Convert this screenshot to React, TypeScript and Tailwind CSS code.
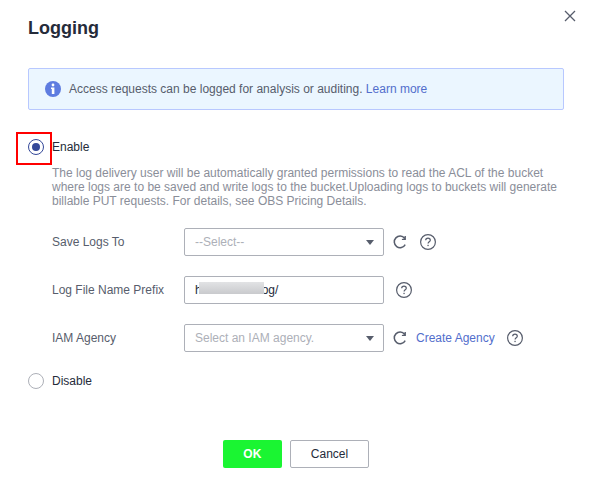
import { useState } from "react";

// stands for the part of the prefix hidden by the mask
const maskedPrefix = "h" + "\u00a0".repeat(18) + "og/";

const radioClass =
  "relative size-4 shrink-0 appearance-none rounded-full border border-[#adb0b8] bg-white checked:border-[#344899] checked:before:absolute checked:before:inset-[3px] checked:before:rounded-full checked:before:bg-[#344899] checked:before:content-['']";

const fieldClass =
  "h-7 w-full appearance-none rounded-xs border border-[#adb0b8] bg-white px-2.5 outline-none focus:border-[#526ecc]";

function InfoIcon() {
  return (
    <svg className="size-4 shrink-0" viewBox="0 0 16 16" aria-hidden="true">
      <circle cx="8" cy="8" r="8" fill="#5e7ce0" />
      <circle cx="8" cy="4" r="1.4" fill="#fff" />
      <path d="M6 6.4h3.4V13H6.8V7.9H6z" fill="#fff" />
    </svg>
  );
}

function RefreshButton({ label }: { label: string }) {
  return (
    <button type="button" aria-label={label} className="ml-2 size-4 shrink-0">
      <svg className="size-4" viewBox="0 0 16 16" fill="none" aria-hidden="true">
        <path d="M12.6 4.2A5.8 5.8 0 1 0 13.2 10.6" stroke="#575d6c" strokeWidth="1.5" />
        <path d="M13.9 2v4H9.9V4.9l2.2-.3.5-2.6z" fill="#575d6c" />
      </svg>
    </button>
  );
}

function HelpButton({ label }: { label: string }) {
  return (
    <button type="button" aria-label={label} className="ml-3 size-4 shrink-0">
      <svg className="size-4" viewBox="0 0 16 16" fill="none" aria-hidden="true">
        <circle cx="8" cy="8" r="7.4" stroke="#575d6c" strokeWidth="1.2" />
        <path
          d="M5.7 6.3C5.7 4.9 6.6 4.1 8 4.1s2.3.8 2.3 2.1c0 1.6-2.2 1.7-2.2 3.4"
          stroke="#575d6c"
          strokeWidth="1.2"
        />
        <rect x="7.4" y="10.8" width="1.3" height="1.3" fill="#575d6c" />
      </svg>
    </button>
  );
}

function SelectField({ id, placeholder }: { id: string; placeholder: string }) {
  return (
    <div className="relative w-[200px]">
      <select id={id} className={`${fieldClass} text-[#adb0b8]`}>
        <option>{placeholder}</option>
      </select>
      <svg
        className="pointer-events-none absolute top-3 right-2.5 h-[5px] w-2"
        viewBox="0 0 8 5"
        aria-hidden="true"
      >
        <path d="M0 0h8L4 5z" fill="#575d6c" />
      </svg>
    </div>
  );
}

export default function App() {
  const [mode, setMode] = useState("enable");
  const [prefix, setPrefix] = useState(maskedPrefix);

  return (
    <div
      role="dialog"
      aria-labelledby="title"
      className="relative bg-white pt-4 pr-[25px] pb-5 pl-7 font-['Liberation_Sans',Arial,sans-serif] text-xs text-[#575d6c]"
    >
      <button type="button" aria-label="Close" className="absolute top-2 right-[11px] p-0.5">
        <svg className="size-3" viewBox="0 0 12 12" fill="none" aria-hidden="true">
          <path d="M1 1l10 10M11 1L1 11" stroke="#575d6c" strokeWidth="1.3" />
        </svg>
      </button>

      <h1 id="title" className="text-lg leading-6 font-bold text-[#252b3a]">
        Logging
      </h1>

      <div className="mt-7 flex items-center gap-2 rounded-xs border border-[#b8c8ff] bg-[#ebf6ff] px-4 py-3">
        <InfoIcon />
        <p>
          Access requests can be logged for analysis or auditing.{" "}
          <a href="#" className="text-[#526ecc]">
            Learn more
          </a>
        </p>
      </div>

      <form onSubmit={(e) => e.preventDefault()}>
        <div className="relative mt-[29px] flex items-center">
          <label className="flex items-center gap-2 text-[#252b3a]">
            <input
              type="radio"
              name="mode"
              className={radioClass}
              checked={mode === "enable"}
              onChange={() => setMode("enable")}
            />
            Enable
          </label>
          <div className="pointer-events-none absolute -top-[7px] -left-3 h-[33px] w-9 border-2 border-[#ff0000]" />
        </div>

        <div className="mt-[11px] pl-6">
          <p className="leading-[14px] text-[#8a8e99]">
            The log delivery user will be automatically granted permissions to read the ACL of the
            bucket where logs are to be saved and write logs to the bucket.Uploading logs to buckets
            will generate billable PUT requests. For details, see OBS Pricing Details.
          </p>

          <div className="mt-5 flex flex-col gap-5">
            <div className="flex items-center">
              <label htmlFor="bucket" className="w-[132px]">
                Save Logs To
              </label>
              <SelectField id="bucket" placeholder="--Select--" />
              <RefreshButton label="Refresh buckets" />
              <HelpButton label="Bucket help" />
            </div>

            <div className="flex items-center">
              <label htmlFor="prefix" className="w-[132px]">
                Log File Name Prefix
              </label>
              <div className="relative w-[200px]">
                <input
                  id="prefix"
                  type="text"
                  value={prefix}
                  onChange={(e) => setPrefix(e.target.value)}
                  className={`${fieldClass} text-[#252b3a]`}
                />
                <div className="pointer-events-none absolute top-1.5 left-[15px] h-3 w-[65px] bg-linear-to-b from-[#e2e3e5] to-[#c9cacd]" />
              </div>
              <HelpButton label="Prefix help" />
            </div>

            <div className="flex items-center">
              <label htmlFor="agency" className="w-[132px]">
                IAM Agency
              </label>
              <SelectField id="agency" placeholder="Select an IAM agency." />
              <RefreshButton label="Refresh agencies" />
              <a href="#" className="ml-2 text-[#526ecc]">
                Create Agency
              </a>
              <HelpButton label="Agency help" />
            </div>
          </div>
        </div>

        <div className="mt-[21px] flex items-center">
          <label className="flex items-center gap-2 text-[#252b3a]">
            <input
              type="radio"
              name="mode"
              className={radioClass}
              checked={mode === "disable"}
              onChange={() => setMode("disable")}
            />
            Disable
          </label>
        </div>

        <div className="mt-[51px] flex justify-center gap-2">
          <button
            type="submit"
            className="h-7 min-w-[59px] rounded-xs bg-[#1af532] px-5 font-bold text-white"
          >
            OK
          </button>
          <button
            type="button"
            className="h-7 rounded-xs border border-[#adb0b8] bg-white px-5 text-[#252b3a]"
          >
            Cancel
          </button>
        </div>
      </form>
    </div>
  );
}
